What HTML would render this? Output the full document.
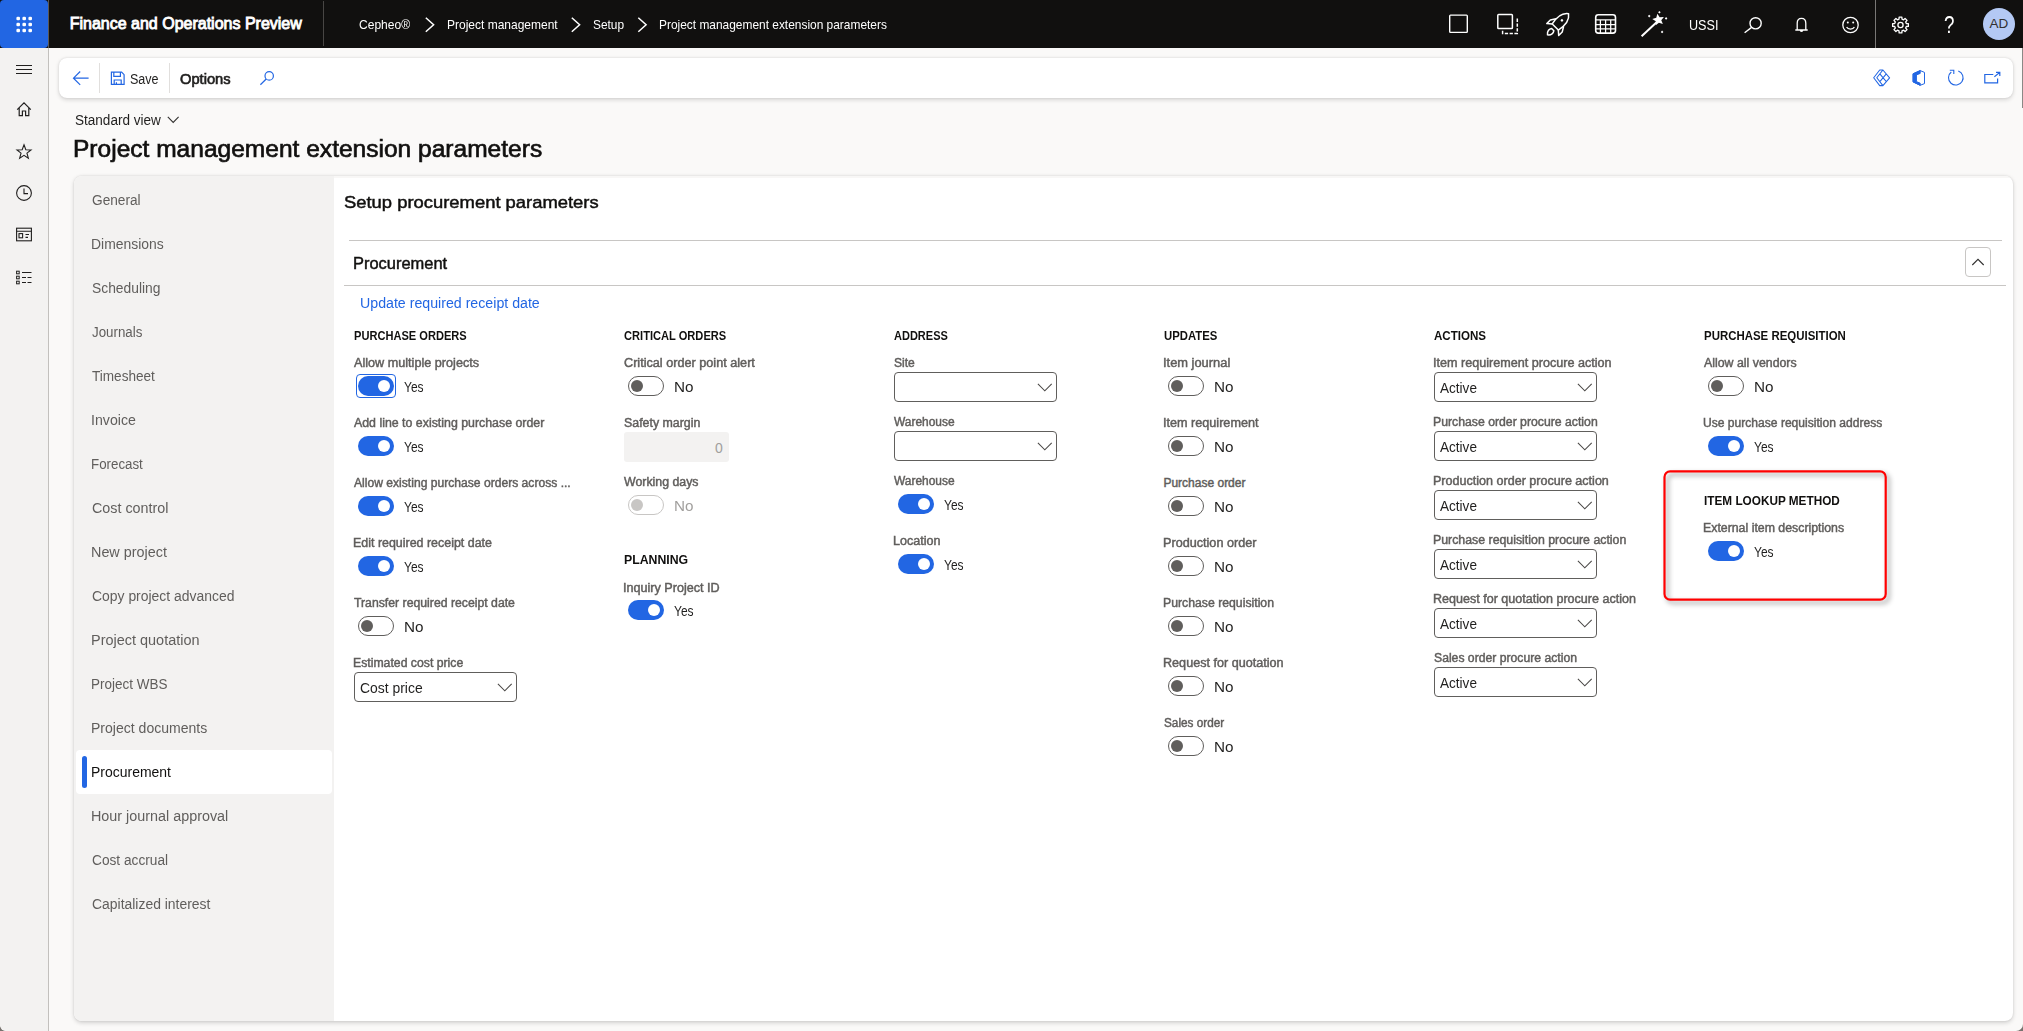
<!DOCTYPE html>
<html lang="en"><head><meta charset="utf-8"><title>Project management extension parameters</title>
<style>
*{box-sizing:border-box;margin:0;padding:0}
html{background:#77736f}
html,body{width:2023px;height:1031px;overflow:hidden}
body{background:#faf9f8;font-family:"Liberation Sans",sans-serif;color:#201f1e;position:relative;border-radius:0 0 7px 6px}
.a{position:absolute;white-space:nowrap}
svg{position:absolute;overflow:visible}
#top{left:0;top:0;width:2023px;height:48px;background:#11100f}
#waffle{left:0;top:0;width:48px;height:48px;background:#2266e3;border-radius:4px}
#rail{left:0;top:48px;width:49px;height:983px;background:#f3f2f1;border-right:1px solid #c2c0bd;border-bottom-left-radius:6px}
.t{position:absolute;white-space:nowrap;line-height:20px;height:20px;margin-top:-10px;transform-origin:0 50%}
.bc{color:#fff;font-size:13px}
#toolbar{left:59px;top:58px;width:1954px;height:40px;background:#fff;border-radius:8px;box-shadow:0 1.5px 4px rgba(0,0,0,.14),0 0 2px rgba(0,0,0,.10)}
#card{left:74px;top:176px;width:1939px;height:845px;background:#fff;border-radius:8px;box-shadow:0 1.5px 4px rgba(0,0,0,.16),0 0 2px rgba(0,0,0,.10);overflow:hidden}
#tabs{left:0;top:0;width:260px;height:845px;background:#f3f2f1}
#cardtop{left:260px;top:0;width:1679px;height:2px;background:#f8f7f6}
.tab{color:#605e5c;font-size:14px}
.hdr{font-weight:bold;font-size:12px;color:#11100f}
.lbl{font-size:12px;color:#605e5c;-webkit-text-stroke:0.45px #605e5c}
.val{font-size:14px;color:#201f1e}
.tg{position:absolute;width:36px;height:20px;border-radius:10px}
.tg.on{background:#2266e3}
.tg.on i{position:absolute;left:20px;top:4px;width:12px;height:12px;border-radius:6px;background:#fff}
.tg.off{background:#fff;border:1px solid #605e5c}
.tg.off i{position:absolute;left:1.8px;top:3px;width:12px;height:12px;border-radius:6px;background:#605e5c}
.tg.dis{border-color:#c8c6c4}
.tg.dis i{background:#c8c6c4}
.sel{position:absolute;width:163px;height:30px;border:1px solid #605e5c;border-radius:4px;background:#fff}
.hl{position:absolute;height:1px;background:#c8c6c4}
</style></head>
<body>
<div class="a" id="top"></div>
<div class="a" id="waffle"></div>
<div class="a" style="left:48px;top:0;width:1px;height:48px;background:#5a5856"></div>
<svg class="a" style="left:0;top:0;" width="1" height="1" fill="#fff" stroke="none" stroke-width="1.3" ><rect x="16.4" y="16.8" width="3.6" height="3.4" rx="1.3"/><rect x="16.4" y="22.8" width="3.6" height="3.4" rx="1.3"/><rect x="16.4" y="28.8" width="3.6" height="3.4" rx="1.3"/><rect x="22.4" y="16.8" width="3.6" height="3.4" rx="1.3"/><rect x="22.4" y="22.8" width="3.6" height="3.4" rx="1.3"/><rect x="22.4" y="28.8" width="3.6" height="3.4" rx="1.3"/><rect x="28.4" y="16.8" width="3.6" height="3.4" rx="1.3"/><rect x="28.4" y="22.8" width="3.6" height="3.4" rx="1.3"/><rect x="28.4" y="28.8" width="3.6" height="3.4" rx="1.3"/></svg>
<div class="t" style="left:69.70px;top:23.7px;color:#fff;-webkit-text-stroke:0.055em;font-size:16px">Finance and Operations Preview</div>
<div class="a" style="left:323px;top:1px;width:1px;height:45px;background:#484644"></div>
<div class="t bc" style="left:358.94px;top:25.2px;transform:scaleX(0.9270)">Cepheo®</div>
<div class="t bc" style="left:446.66px;top:25.2px;transform:scaleX(0.9228)">Project management</div>
<div class="t bc" style="left:593.03px;top:25.2px;transform:scaleX(0.9141)">Setup</div>
<div class="t bc" style="left:659.27px;top:25.2px;transform:scaleX(0.9168)">Project management extension parameters</div>
<svg class="a" style="left:0;top:0;" width="1" height="1" fill="none" stroke="#fff" stroke-width="1.5" ><path d="M425.8 17.8 L433.6 24.8 L425.8 31.8"/></svg>
<svg class="a" style="left:0;top:0;" width="1" height="1" fill="none" stroke="#fff" stroke-width="1.5" ><path d="M571.8 17.8 L579.6 24.8 L571.8 31.8"/></svg>
<svg class="a" style="left:0;top:0;" width="1" height="1" fill="none" stroke="#fff" stroke-width="1.5" ><path d="M638.3 17.8 L646.1 24.8 L638.3 31.8"/></svg>
<div class="a" style="left:1875px;top:0;width:1px;height:48px;background:#797775"></div>
<svg class="a" style="left:0;top:0;" width="1" height="1" fill="none" stroke="#fff" stroke-width="1.4" ><rect x="1449.7" y="15.1" width="17.6" height="17.3" rx="0.8"/></svg>
<svg class="a" style="left:0;top:0;" width="1" height="1" fill="none" stroke="#fff" stroke-width="1.5" ><rect x="1497.8" y="14.6" width="14.6" height="14" rx="0.8"/><path d="M1517.3 18.6 V33.4 H1502.6 V30.4" stroke-dasharray="3.3 1.5"/></svg>
<svg class="a" style="left:0;top:0;" width="1" height="1" fill="none" stroke="#fff" stroke-width="1.5" stroke-linejoin="round"><g transform="translate(1558.4,23.9) rotate(45)"><path d="M0,-14.4 C5.2,-10.6 6,-3 4.3,4.4 L-4.3,4.4 C-6,-3 -5.2,-10.6 0,-14.4 Z"/><circle cx="0" cy="-5" r="1.3" fill="#fff" stroke="none"/><path d="M-5.4,-2 L-8.4,3 V8 L-4.3,4.4"/><path d="M5.4,-2 L8.4,3 V8 L4.3,4.4"/><path d="M0,15.4 C-3.2,13 -3,9.8 -1.6,8 L1.6,8 C3,9.8 3.2,13 0,15.4 Z"/></g></svg>
<svg class="a" style="left:0;top:0;" width="1" height="1" fill="none" stroke="#fff" stroke-width="1.6" ><rect x="1595.7" y="14.8" width="19.8" height="18.3" rx="2.6"/><path d="M1595.7 19.9 H1615.5 M1595.7 24.6 H1615.5 M1595.7 28.9 H1615.5 M1600.4 19.9 V33 M1605.6 19.9 V33 M1610.7 19.9 V33" stroke-width="1.25"/></svg>
<svg class="a" style="left:0;top:0;" width="1" height="1" fill="none" stroke="#fff" stroke-width="1.3" ><path d="M1641.6 36.3 L1656.6 22.3" stroke-width="2"/><polygon points="1657.32,13.69 1659.67,17.19 1663.87,16.89 1661.27,20.20 1662.86,24.11 1658.90,22.66 1655.68,25.37 1655.84,21.16 1652.26,18.94 1656.31,17.79" fill="#fff" stroke="none"/><path d="M1658.1000000000001 12.3 L1659.4 11.0 L1660.7 12.3 L1659.4 13.600000000000001 Z" fill="#fff" stroke="none"/><path d="M1647.9 16.1 L1649.2 14.8 L1650.5 16.1 L1649.2 17.400000000000002 Z" fill="#fff" stroke="none"/><path d="M1664.8 18.4 L1666.1 17.099999999999998 L1667.3999999999999 18.4 L1666.1 19.7 Z" fill="#fff" stroke="none"/><path d="M1660.8 31.9 L1662.1 30.599999999999998 L1663.3999999999999 31.9 L1662.1 33.199999999999996 Z" fill="#fff" stroke="none"/></svg>
<div class="t" style="left:1689.01px;top:24.9px;color:#fff;font-size:14px;transform:scaleX(0.9006)">USSI</div>
<svg class="a" style="left:0;top:0;" width="1" height="1" fill="none" stroke="#fff" stroke-width="1.4" ><circle cx="1755.6" cy="23.3" r="5.6"/><path d="M1751.6 27.4 L1744.6 32.8"/></svg>
<svg class="a" style="left:0;top:0;" width="1" height="1" fill="none" stroke="#fff" stroke-width="1.3" ><path d="M1797.2 30 V23.2 C1797.2 20.2 1799 18.3 1801.5 18.3 C1804 18.3 1805.8 20.2 1805.8 23.2 V30 M1795.3 30 H1807.7 M1800.3 30.2 C1800.3 31.6 1802.7 31.6 1802.7 30.2"/></svg>
<svg class="a" style="left:0;top:0;" width="1" height="1" fill="none" stroke="#fff" stroke-width="1.3" ><circle cx="1850.5" cy="25" r="7.7"/><path d="M1846.6 27 C1848 29.8 1853 29.8 1854.4 27"/><circle cx="1847.8" cy="22.6" r="1" fill="#fff" stroke="none"/><circle cx="1853.2" cy="22.6" r="1" fill="#fff" stroke="none"/></svg>
<svg class="a" style="left:0;top:0;" width="1" height="1" fill="none" stroke="#fff" stroke-width="1.3" ><path d="M1908.38 23.62 L1908.38 26.38 L1906.31 26.49 L1905.66 28.05 L1907.05 29.60 L1905.10 31.55 L1903.55 30.16 L1901.99 30.81 L1901.88 32.88 L1899.12 32.88 L1899.01 30.81 L1897.45 30.16 L1895.90 31.55 L1893.95 29.60 L1895.34 28.05 L1894.69 26.49 L1892.62 26.38 L1892.62 23.62 L1894.69 23.51 L1895.34 21.95 L1893.95 20.40 L1895.90 18.45 L1897.45 19.84 L1899.01 19.19 L1899.12 17.12 L1901.88 17.12 L1901.99 19.19 L1903.55 19.84 L1905.10 18.45 L1907.05 20.40 L1905.66 21.95 L1906.31 23.51 Z" stroke-linejoin="round"/><circle cx="1900.5" cy="25" r="2.6"/></svg>
<div class="t" style="left:1943.81px;top:25.1px;color:#fff;font-size:23px;line-height:24px;height:24px;margin-top:-12px;transform:scaleX(0.8174)">?</div>
<div class="a" style="left:1983px;top:8px;width:32px;height:32px;border-radius:16px;background:#b4c9f4"></div>
<div class="t" style="left:1989.60px;top:24.2px;color:#323130;font-size:13.5px">AD</div>
<div class="a" id="rail"></div>
<svg class="a" style="left:0;top:0;" width="1" height="1" fill="none" stroke="#201f1e" stroke-width="1" ><path d="M16 65.5 H32 M16 69.5 H32 M16 73.5 H32"/></svg>
<svg class="a" style="left:0;top:0;" width="1" height="1" fill="none" stroke="#201f1e" stroke-width="1.2" ><path d="M17.2 109.6 L24 102.9 L30.8 109.6 M19.2 108 V115.6 H22.4 V111 H25.6 V115.6 H28.8 V108"/></svg>
<svg class="a" style="left:0;top:0;" width="1" height="1" fill="none" stroke="#201f1e" stroke-width="1.1" ><polygon points="24.00,144.80 25.82,149.69 31.04,149.91 26.95,153.16 28.35,158.19 24.00,155.30 19.65,158.19 21.05,153.16 16.96,149.91 22.18,149.69"/></svg>
<svg class="a" style="left:0;top:0;" width="1" height="1" fill="none" stroke="#201f1e" stroke-width="1.1" ><circle cx="24" cy="193" r="7.4"/><path d="M24 188.4 V193.6 H28"/></svg>
<svg class="a" style="left:0;top:0;" width="1" height="1" fill="none" stroke="#201f1e" stroke-width="1.1" ><rect x="16.6" y="228.2" width="14.8" height="12.6"/><path d="M16.6 231.2 H31.4 M25.5 234.5 H29 M25.5 237.4 H28"/><rect x="19" y="233.6" width="3.6" height="4.2"/></svg>
<svg class="a" style="left:0;top:0;" width="1" height="1" fill="none" stroke="#201f1e" stroke-width="1" ><rect x="16.6" y="271.2" width="2.6" height="2.6"/><rect x="16.6" y="276.2" width="2.6" height="2.6"/><rect x="16.6" y="281.2" width="2.6" height="2.6"/><path d="M22 272.5 H31.5"/><path d="M22 277.5 H31.5 M22 282.5 H31.5" stroke-dasharray="4 1.5"/></svg>
<div class="a" id="toolbar"></div>
<svg class="a" style="left:0;top:0;" width="1" height="1" fill="none" stroke="#2266e3" stroke-width="1.2" ><path d="M88.6 78.2 H73.6 M80.2 71.5 L73.5 78.2 L80.2 84.9"/></svg>
<div class="a" style="left:99px;top:63px;width:1px;height:30px;background:#e1dfdd"></div>
<svg class="a" style="left:0;top:0;" width="1" height="1" fill="none" stroke="#2266e3" stroke-width="1.2" ><path d="M111.4 72.2 H121.6 L124.1 74.7 V84.4 H111.4 Z M113.8 72.2 V76.4 H120.4 V72.2 M114.2 84.4 V80 H121.2 V84.4 M116.4 84.4 V82.3"/></svg>
<div class="t" style="left:130.21px;top:79.1px;font-size:14px;color:#201f1e;transform:scaleX(0.8963)">Save</div>
<div class="a" style="left:169px;top:63px;width:1px;height:30px;background:#e1dfdd"></div>
<div class="t" style="left:180.46px;top:79.1px;font-size:14px;-webkit-text-stroke:0.045em;color:#201f1e;transform:scaleX(1.0497)">Options</div>
<svg class="a" style="left:0;top:0;" width="1" height="1" fill="none" stroke="#2266e3" stroke-width="1.2" ><circle cx="269.2" cy="75.9" r="4.2"/><path d="M266.2 79 L260.4 84.7"/></svg>
<svg class="a" style="left:0;top:0;" width="1" height="1" fill="none" stroke="#2266e3" stroke-width="1.05" stroke-linejoin="round"><path d="M1876.8 77.8 L1882.9 70 L1889.6 77.8 L1882.9 85.6 Z M1879.85 73.9 L1886.3 81.7 M1886.3 73.9 L1879.85 81.7 M1882.9 70 H1879.7 L1873.7 77.8 L1879.7 85.6 H1882.9"/></svg>
<svg class="a" style="left:0;top:0;" width="1" height="1" fill="none" stroke="#2266e3" stroke-width="1" ><path d="M1920.2 70.6 L1913.1 73.8 V81.9 L1920.2 85.3 L1924.5 83.6 V72.4 Z"/><path d="M1920.2 70.6 L1913.1 73.8 V81.9 L1920.2 85.3 V83.2 L1916.4 81.6 V74.9 L1920.2 73.4 Z" fill="#2266e3"/></svg>
<svg class="a" style="left:0;top:0;" width="1" height="1" fill="none" stroke="#2266e3" stroke-width="1.1" ><path d="M1958.3 70.9 A7.3 7.3 0 1 1 1951.3 72"/><path d="M1949.8 70.2 H1953.8 V74"/></svg>
<svg class="a" style="left:0;top:0;" width="1" height="1" fill="none" stroke="#2266e3" stroke-width="1.2" ><path d="M1993.3 74.5 H1984.8 V82.8 H1997.6 V78.5 M1994.4 76.8 L1999.5 72.6 M1996 72.3 H1999.8 V76"/></svg>
<div class="t" style="left:75.18px;top:120px;font-size:14px;color:#201f1e;transform:scaleX(0.9678)">Standard view</div>
<svg class="a" style="left:0;top:0;" width="1" height="1" fill="none" stroke="#323130" stroke-width="1.1" ><path d="M167.8 116.9 L173.2 122.4 L178.6 116.9"/></svg>
<div class="t" style="left:73.34px;top:149.2px;font-size:23px;-webkit-text-stroke:0.028em;color:#11100f;line-height:30px;height:30px;margin-top:-15px;transform:scaleX(1.0668)">Project management extension parameters</div>
<div class="a" id="card"><div class="a" id="tabs"></div><div class="a" id="cardtop"></div></div>
<div class="a" style="left:76px;top:750px;width:256px;height:44px;background:#fff;border-radius:4px"></div>
<div class="a" style="left:82px;top:756px;width:5px;height:32px;background:#2266e3;border-radius:2.5px"></div>
<div class="t tab" style="left:91.76px;top:200.1px;transform:scaleX(0.9766)">General</div>
<div class="t tab" style="left:91.31px;top:244.1px;transform:scaleX(0.9943)">Dimensions</div>
<div class="t tab" style="left:91.97px;top:288.1px;transform:scaleX(0.9890)">Scheduling</div>
<div class="t tab" style="left:92.19px;top:332.1px;transform:scaleX(0.9529)">Journals</div>
<div class="t tab" style="left:92.19px;top:376.1px;transform:scaleX(0.9696)">Timesheet</div>
<div class="t tab" style="left:91.29px;top:420.1px;transform:scaleX(1.0118)">Invoice</div>
<div class="t tab" style="left:91.36px;top:464.1px;transform:scaleX(0.9510)">Forecast</div>
<div class="t tab" style="left:91.73px;top:508.1px;transform:scaleX(1.0230)">Cost control</div>
<div class="t tab" style="left:91.28px;top:552.1px;transform:scaleX(1.0265)">New project</div>
<div class="t tab" style="left:91.75px;top:596.1px;transform:scaleX(0.9947)">Copy project advanced</div>
<div class="t tab" style="left:91.27px;top:640.1px;transform:scaleX(1.0331)">Project quotation</div>
<div class="t tab" style="left:91.35px;top:684.1px;transform:scaleX(0.9630)">Project WBS</div>
<div class="t tab" style="left:91.30px;top:728.1px;transform:scaleX(1.0025)">Project documents</div>
<div class="t tab" style="left:91.31px;top:772.1px;color:#11100f;transform:scaleX(0.9975)">Procurement</div>
<div class="t tab" style="left:91.28px;top:816.1px;transform:scaleX(1.0255)">Hour journal approval</div>
<div class="t tab" style="left:91.76px;top:860.1px;transform:scaleX(0.9773)">Cost accrual</div>
<div class="t tab" style="left:91.75px;top:904.1px;transform:scaleX(0.9945)">Capitalized interest</div>
<div class="t" style="left:344.22px;top:202.2px;font-size:17.2px;-webkit-text-stroke:0.028em;color:#11100f;line-height:24px;height:24px;margin-top:-12px;transform:scaleX(1.0706)">Setup procurement parameters</div>
<div class="hl" style="left:349px;top:240px;width:1653px"></div>
<div class="t" style="left:353.39px;top:263.6px;font-size:16px;-webkit-text-stroke:0.028em;color:#11100f;transform:scaleX(1.0281)">Procurement</div>
<div class="hl" style="left:344px;top:285px;width:1662px"></div>
<div class="a" style="left:1965px;top:247px;width:26px;height:30px;border:1px solid #c8c6c4;border-radius:4px;background:#fff"></div>
<svg class="a" style="left:0;top:0;" width="1" height="1" fill="none" stroke="#323130" stroke-width="1.1" ><path d="M1972.3 265 L1978 259.3 L1983.7 265"/></svg>
<div class="t" style="left:360.31px;top:302.6px;font-size:14px;color:#2266e3;transform:scaleX(1.0130)">Update required receipt date</div>
<div class="t hdr" style="left:353.96px;top:335.6px;transform:scaleX(0.9241)">PURCHASE ORDERS</div>
<div class="t lbl" style="left:354.38px;top:363.4px;transform:scaleX(1.0535)">Allow multiple projects</div>
<div class="tg on" style="left:358px;top:376.3px"><i></i></div>
<div class="t val" style="left:404.21px;top:387.1px;transform:scaleX(0.8565)">Yes</div>
<div class="t lbl" style="left:354.38px;top:423.4px;transform:scaleX(1.0301)">Add line to existing purchase order</div>
<div class="tg on" style="left:358px;top:436.3px"><i></i></div>
<div class="t val" style="left:404.21px;top:447.1px;transform:scaleX(0.8565)">Yes</div>
<div class="t lbl" style="left:354.38px;top:483.4px;transform:scaleX(1.0092)">Allow existing purchase orders across ...</div>
<div class="tg on" style="left:358px;top:496.3px"><i></i></div>
<div class="t val" style="left:404.21px;top:507.1px;transform:scaleX(0.8565)">Yes</div>
<div class="t lbl" style="left:353.40px;top:543.4px;transform:scaleX(1.0365)">Edit required receipt date</div>
<div class="tg on" style="left:358px;top:556.3px"><i></i></div>
<div class="t val" style="left:404.21px;top:567.1px;transform:scaleX(0.8565)">Yes</div>
<div class="t lbl" style="left:354.12px;top:603.4px;transform:scaleX(1.0209)">Transfer required receipt date</div>
<div class="tg off" style="left:358px;top:616.3px"><i></i></div>
<div class="t val" style="left:404.01px;top:627.1px;transform:scaleX(1.0902)">No</div>
<div class="a" style="left:356px;top:374px;width:40px;height:24px;border:1px solid #2266e3;border-radius:4px"></div>
<div class="t lbl" style="left:353.41px;top:663.4px;transform:scaleX(1.0204)">Estimated cost price</div>
<div class="sel" style="left:354px;top:672px"></div>
<svg class="a" style="left:0;top:0;" width="1" height="1" fill="none" stroke="#4a4846" stroke-width="1.05" ><path d="M497.9 683.9 L504.8 690.8 L511.7 683.9"/></svg>
<div class="t val" style="left:359.65px;top:688px;transform:scaleX(0.9936)">Cost price</div>
<div class="t hdr" style="left:624.18px;top:335.6px;transform:scaleX(0.9256)">CRITICAL ORDERS</div>
<div class="t lbl" style="left:623.65px;top:363.4px;transform:scaleX(1.0549)">Critical order point alert</div>
<div class="tg off" style="left:628px;top:376.3px"><i></i></div>
<div class="t val" style="left:674.01px;top:387.1px;transform:scaleX(1.0902)">No</div>
<div class="t lbl" style="left:623.76px;top:423.4px;transform:scaleX(1.0313)">Safety margin</div>
<div class="a" style="left:624px;top:432px;width:105px;height:30px;background:#f3f2f1;border-radius:3px"></div>
<div class="t val" style="left:714.96px;top:448.2px;color:#a19f9d">0</div>
<div class="t lbl" style="left:624.23px;top:482.0px;transform:scaleX(1.0280)">Working days</div>
<div class="tg off dis" style="left:628px;top:495.3px"><i></i></div>
<div class="t val" style="left:674.01px;top:506.1px;color:#a19f9d;transform:scaleX(1.0902)">No</div>
<div class="t hdr" style="left:623.78px;top:559.7px;transform:scaleX(1.0240)">PLANNING</div>
<div class="t lbl" style="left:623.12px;top:587.5px;transform:scaleX(1.0506)">Inquiry Project ID</div>
<div class="tg on" style="left:628px;top:600.3px"><i></i></div>
<div class="t val" style="left:674.21px;top:611.1px;transform:scaleX(0.8565)">Yes</div>
<div class="t hdr" style="left:894.37px;top:335.6px;transform:scaleX(0.9177)">ADDRESS</div>
<div class="t lbl" style="left:893.78px;top:363.4px;transform:scaleX(1.0044)">Site</div>
<div class="sel" style="left:894px;top:372px"></div>
<svg class="a" style="left:0;top:0;" width="1" height="1" fill="none" stroke="#4a4846" stroke-width="1.05" ><path d="M1037.9 383.9 L1044.8 390.8 L1051.7 383.9"/></svg>
<div class="t lbl" style="left:894.23px;top:422.4px;transform:scaleX(0.9949)">Warehouse</div>
<div class="sel" style="left:894px;top:431px"></div>
<svg class="a" style="left:0;top:0;" width="1" height="1" fill="none" stroke="#4a4846" stroke-width="1.05" ><path d="M1037.9 442.9 L1044.8 449.8 L1051.7 442.9"/></svg>
<div class="t lbl" style="left:894.23px;top:481.4px;transform:scaleX(0.9949)">Warehouse</div>
<div class="tg on" style="left:898px;top:494.3px"><i></i></div>
<div class="t val" style="left:944.21px;top:505.1px;transform:scaleX(0.8565)">Yes</div>
<div class="t lbl" style="left:893.29px;top:541.4px;transform:scaleX(1.0457)">Location</div>
<div class="tg on" style="left:898px;top:554.3px"><i></i></div>
<div class="t val" style="left:944.21px;top:565.1px;transform:scaleX(0.8565)">Yes</div>
<div class="t hdr" style="left:1164.04px;top:335.6px;transform:scaleX(0.9440)">UPDATES</div>
<div class="t lbl" style="left:1163.20px;top:363.4px;transform:scaleX(1.0725)">Item journal</div>
<div class="tg off" style="left:1168px;top:376.3px"><i></i></div>
<div class="t val" style="left:1214.01px;top:387.1px;transform:scaleX(1.0902)">No</div>
<div class="t lbl" style="left:1163.22px;top:423.4px;transform:scaleX(1.0527)">Item requirement</div>
<div class="tg off" style="left:1168px;top:436.3px"><i></i></div>
<div class="t val" style="left:1214.01px;top:447.1px;transform:scaleX(1.0902)">No</div>
<div class="t lbl" style="left:1163.43px;top:483.4px">Purchase order</div>
<div class="tg off" style="left:1168px;top:496.3px"><i></i></div>
<div class="t val" style="left:1214.01px;top:507.1px;transform:scaleX(1.0902)">No</div>
<div class="t lbl" style="left:1163.38px;top:543.4px;transform:scaleX(1.0533)">Production order</div>
<div class="tg off" style="left:1168px;top:556.3px"><i></i></div>
<div class="t val" style="left:1214.01px;top:567.1px;transform:scaleX(1.0902)">No</div>
<div class="t lbl" style="left:1163.41px;top:603.4px;transform:scaleX(1.0209)">Purchase requisition</div>
<div class="tg off" style="left:1168px;top:616.3px"><i></i></div>
<div class="t val" style="left:1214.01px;top:627.1px;transform:scaleX(1.0902)">No</div>
<div class="t lbl" style="left:1163.38px;top:663.4px;transform:scaleX(1.0506)">Request for quotation</div>
<div class="tg off" style="left:1168px;top:676.3px"><i></i></div>
<div class="t val" style="left:1214.01px;top:687.1px;transform:scaleX(1.0902)">No</div>
<div class="t lbl" style="left:1163.89px;top:723.4px;transform:scaleX(0.9814)">Sales order</div>
<div class="tg off" style="left:1168px;top:736.3px"><i></i></div>
<div class="t val" style="left:1214.01px;top:747.1px;transform:scaleX(1.0902)">No</div>
<div class="t hdr" style="left:1434.46px;top:335.6px;transform:scaleX(0.9644)">ACTIONS</div>
<div class="t lbl" style="left:1433.23px;top:363.4px;transform:scaleX(1.0495)">Item requirement procure action</div>
<div class="sel" style="left:1434px;top:372px"></div>
<svg class="a" style="left:0;top:0;" width="1" height="1" fill="none" stroke="#4a4846" stroke-width="1.05" ><path d="M1577.9 383.9 L1584.8 390.8 L1591.7 383.9"/></svg>
<div class="t val" style="left:1440.30px;top:388px;transform:scaleX(0.9692)">Active</div>
<div class="t lbl" style="left:1433.41px;top:422.4px;transform:scaleX(1.0203)">Purchase order procure action</div>
<div class="sel" style="left:1434px;top:431px"></div>
<svg class="a" style="left:0;top:0;" width="1" height="1" fill="none" stroke="#4a4846" stroke-width="1.05" ><path d="M1577.9 442.9 L1584.8 449.8 L1591.7 442.9"/></svg>
<div class="t val" style="left:1440.30px;top:447px;transform:scaleX(0.9692)">Active</div>
<div class="t lbl" style="left:1433.39px;top:481.4px;transform:scaleX(1.0461)">Production order procure action</div>
<div class="sel" style="left:1434px;top:490px"></div>
<svg class="a" style="left:0;top:0;" width="1" height="1" fill="none" stroke="#4a4846" stroke-width="1.05" ><path d="M1577.9 501.9 L1584.8 508.8 L1591.7 501.9"/></svg>
<div class="t val" style="left:1440.30px;top:506px;transform:scaleX(0.9692)">Active</div>
<div class="t lbl" style="left:1433.40px;top:540.4px;transform:scaleX(1.0277)">Purchase requisition procure action</div>
<div class="sel" style="left:1434px;top:549px"></div>
<svg class="a" style="left:0;top:0;" width="1" height="1" fill="none" stroke="#4a4846" stroke-width="1.05" ><path d="M1577.9 560.9 L1584.8 567.8 L1591.7 560.9"/></svg>
<div class="t val" style="left:1440.30px;top:565px;transform:scaleX(0.9692)">Active</div>
<div class="t lbl" style="left:1433.39px;top:599.4px;transform:scaleX(1.0454)">Request for quotation procure action</div>
<div class="sel" style="left:1434px;top:608px"></div>
<svg class="a" style="left:0;top:0;" width="1" height="1" fill="none" stroke="#4a4846" stroke-width="1.05" ><path d="M1577.9 619.9 L1584.8 626.8 L1591.7 619.9"/></svg>
<div class="t val" style="left:1440.30px;top:624px;transform:scaleX(0.9692)">Active</div>
<div class="t lbl" style="left:1433.87px;top:658.4px;transform:scaleX(1.0156)">Sales order procure action</div>
<div class="sel" style="left:1434px;top:667px"></div>
<svg class="a" style="left:0;top:0;" width="1" height="1" fill="none" stroke="#4a4846" stroke-width="1.05" ><path d="M1577.9 678.9 L1584.8 685.8 L1591.7 678.9"/></svg>
<div class="t val" style="left:1440.30px;top:683px;transform:scaleX(0.9692)">Active</div>
<div class="t hdr" style="left:1703.94px;top:335.6px;transform:scaleX(0.9537)">PURCHASE REQUISITION</div>
<div class="t lbl" style="left:1704.38px;top:363.4px;transform:scaleX(1.0290)">Allow all vendors</div>
<div class="tg off" style="left:1708px;top:376.3px"><i></i></div>
<div class="t val" style="left:1754.01px;top:387.1px;transform:scaleX(1.0902)">No</div>
<div class="t lbl" style="left:1703.47px;top:423.4px;transform:scaleX(1.0065)">Use purchase requisition address</div>
<div class="tg on" style="left:1708px;top:436.3px"><i></i></div>
<div class="t val" style="left:1754.21px;top:447.1px;transform:scaleX(0.8565)">Yes</div>
<div class="t hdr" style="left:1703.92px;top:500.6px;transform:scaleX(0.9811)">ITEM LOOKUP METHOD</div>
<div class="t lbl" style="left:1703.40px;top:527.8px;transform:scaleX(1.0272)">External item descriptions</div>
<div class="tg on" style="left:1708px;top:541.3px"><i></i></div>
<div class="t val" style="left:1754.21px;top:552.1px;transform:scaleX(0.8565)">Yes</div>
<div class="a" style="left:2022px;top:48px;width:1px;height:60px;background:#8a8886"></div>
<svg class="a" style="left:0;top:0;filter:drop-shadow(3.4px 3.4px 2.8px rgba(0,0,0,.42))" width="1" height="1" fill="none" stroke="#ff0000" stroke-width="2.2" ><rect x="1664.5" y="471.3" width="221.2" height="128.4" rx="5.6"/></svg>
</body></html>
